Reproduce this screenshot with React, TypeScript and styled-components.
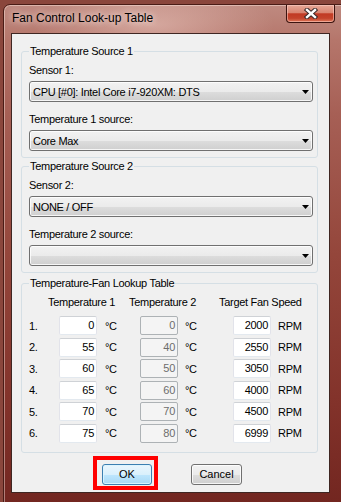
import { Fragment } from 'react';
import styled, { createGlobalStyle } from 'styled-components';

const GlobalStyle = createGlobalStyle`
  html, body { margin: 0; padding: 0; }
  body {
    width: 341px;
    height: 502px;
    overflow: hidden;
    background: #8a463c;
    font-family: "Liberation Sans", Arial, sans-serif;
  }
`;

const Window = styled.div`
  box-sizing: border-box;
  margin: 4px 0 0 3px;
  width: 345px;
  height: 502px;
  border: 1px solid #4a1c16;
  border-radius: 7px 7px 0 0;
  box-shadow: inset 0 0 0 1px rgba(255, 232, 226, 0.45);
  background:
    radial-gradient(ellipse 120px 40px at 150px 20px, rgba(235, 200, 192, 0.55), rgba(235, 200, 192, 0) 100%),
    linear-gradient(180deg, #bf8a80 0%, #b5766b 7%, #a65f55 22%, #94463b 50%, #82322a 80%, #722620 100%);
  display: flex;
  flex-direction: column;
`;

const TitleBar = styled.div`
  height: 28px;
  display: flex;
  align-items: flex-start;
  justify-content: space-between;
  flex-shrink: 0;
`;

const Title = styled.span`
  margin: 5px 0 0 8px;
  font-size: 12px;
  line-height: 16px;
  color: #000;
  text-shadow: 0 0 6px rgba(255, 240, 236, 0.9), 0 0 10px rgba(255, 240, 236, 0.6);
`;

const CloseButton = styled.div`
  box-sizing: border-box;
  width: 49px;
  height: 18px;
  margin-right: 12px;
  border: 1px solid #3b1410;
  border-top: none;
  border-radius: 0 0 4px 4px;
  box-shadow: inset 0 0 0 1px rgba(255, 210, 200, 0.55);
  background: linear-gradient(180deg, #e6a797 0%, #d98571 45%, #c13a24 52%, #c4432b 78%, #de7a5c 100%);
  display: flex;
  align-items: center;
  justify-content: center;
`;

const Client = styled.div`
  box-sizing: border-box;
  width: 319px;
  height: 460px;
  margin-left: 7px;
  border: 1px solid #3f2622;
  background: #f0f0f0;
  padding-top: 10px;
  font-size: 11px;
  letter-spacing: -0.3px;
  color: #000;
`;

const Group = styled.fieldset<{ $top: number; $bottom: number }>`
  margin: ${p => p.$top}px 11px 0 9px;
  padding: 5px 4px ${p => p.$bottom}px 7px;
  border: 1px solid #d5dfe5;
  border-radius: 3px;
  min-width: 0;
`;

const Legend = styled.legend`
  padding: 0 1px;
  line-height: 14px;
`;

const Label = styled.div<{ $gap?: number }>`
  line-height: 14px;
  margin-top: ${p => p.$gap ?? 0}px;
  margin-bottom: 4px;
`;

const Combo = styled.div`
  box-sizing: border-box;
  height: 21px;
  border: 1px solid #707070;
  border-radius: 3px;
  box-shadow: inset 0 0 0 1px rgba(255, 255, 255, 0.8);
  background: linear-gradient(180deg, #f2f2f2 0%, #ebebeb 50%, #dddddd 51%, #cfcfcf 100%);
  display: flex;
  align-items: center;
  padding-left: 3px;
  white-space: nowrap;
`;

const ComboText = styled.span`
  flex: 1;
`;

const Arrow = styled.svg`
  margin-right: 3px;
  flex-shrink: 0;
`;

const HeaderRow = styled.div`
  display: flex;
  padding-left: 19px;
  line-height: 14px;
`;

const Header = styled.span<{ $w?: number }>`
  width: ${p => (p.$w ? `${p.$w}px` : 'auto')};
  white-space: nowrap;
`;

const Rows = styled.div`
  display: grid;
  grid-template-columns: 30px 38px 43px 38px 55px 38px auto;
  grid-auto-rows: 19px;
  row-gap: 2.5px;
  margin-top: 7px;
  align-items: center;
`;

const Index = styled.span`
  line-height: 14px;
`;

const Field = styled.div<{ $disabled?: boolean }>`
  box-sizing: border-box;
  height: 19px;
  border: 1px solid;
  border-color: ${p => (p.$disabled ? '#adb2b5' : '#cfd2d6 #e2e3ea #e3e9ef #e2e3ea')};
  border-radius: 2px;
  background: ${p => (p.$disabled ? '#f4f4f4' : '#ffffff')};
  color: ${p => (p.$disabled ? '#6d6d6d' : '#000')};
  text-align: right;
  padding-right: 2px;
  line-height: 17px;
`;

const Unit = styled.span<{ $pad: number }>`
  padding-left: ${p => p.$pad}px;
  line-height: 14px;
`;

const ButtonRow = styled.div`
  display: flex;
  align-items: flex-start;
  margin-top: 3px;
  padding-left: 81px;
`;

const Highlight = styled.div`
  border: 4px solid #ff0000;
  padding: 4px 2px 1px 5px;
`;

const Button = styled.button<{ $default?: boolean; $w: number }>`
  box-sizing: border-box;
  width: ${p => p.$w}px;
  height: 21px;
  margin: 0;
  padding: 0;
  font-family: "Liberation Sans", Arial, sans-serif;
  font-size: 11px;
  color: #000;
  border-radius: 3px;
  border: 1px solid ${p => (p.$default ? '#3c7fb1' : '#707070')};
  box-shadow: inset 0 0 0 1px ${p => (p.$default ? 'rgba(220, 245, 255, 0.9)' : 'rgba(255, 255, 255, 0.8)')};
  background: ${p =>
    p.$default
      ? 'linear-gradient(180deg, #eaf6fd 0%, #d9f0fc 50%, #bee6fd 51%, #a7d9f5 100%)'
      : 'linear-gradient(180deg, #f2f2f2 0%, #ebebeb 50%, #dddddd 51%, #cfcfcf 100%)'};
`;

const CancelSlot = styled.div`
  margin: 8px 0 0 33px;
`;

const rows = [
  { t1: 0, t2: 0, fan: 2000 },
  { t1: 55, t2: 40, fan: 2550 },
  { t1: 60, t2: 50, fan: 3050 },
  { t1: 65, t2: 60, fan: 4000 },
  { t1: 70, t2: 70, fan: 4500 },
  { t1: 75, t2: 80, fan: 6999 },
];

function DropArrow() {
  return (
    <Arrow width="7" height="4" viewBox="0 0 7 4">
      <polygon points="0,0 7,0 3.5,4" fill="#000" />
    </Arrow>
  );
}

function CloseGlyph() {
  return (
    <svg width="14" height="11" viewBox="0 0 14 11">
      <g strokeLinecap="square">
        <line x1="3" y1="2" x2="11" y2="9" stroke="#3a2a2a" strokeWidth="4.4" />
        <line x1="11" y1="2" x2="3" y2="9" stroke="#3a2a2a" strokeWidth="4.4" />
        <line x1="3" y1="2" x2="11" y2="9" stroke="#ffffff" strokeWidth="2.4" />
        <line x1="11" y1="2" x2="3" y2="9" stroke="#ffffff" strokeWidth="2.4" />
      </g>
    </svg>
  );
}

export default function App() {
  return (
    <>
      <GlobalStyle />
      <Window>
        <TitleBar>
          <Title>Fan Control Look-up Table</Title>
          <CloseButton>
            <CloseGlyph />
          </CloseButton>
        </TitleBar>
        <Client>
          <Group $top={0} $bottom={6}>
            <Legend>Temperature Source 1</Legend>
            <Label>Sensor 1:</Label>
            <Combo>
              <ComboText>CPU [#0]: Intel Core i7-920XM: DTS</ComboText>
              <DropArrow />
            </Combo>
            <Label $gap={10}>Temperature 1 source:</Label>
            <Combo>
              <ComboText>Core Max</ComboText>
              <DropArrow />
            </Combo>
          </Group>

          <Group $top={1} $bottom={6}>
            <Legend>Temperature Source 2</Legend>
            <Label>Sensor 2:</Label>
            <Combo>
              <ComboText>NONE / OFF</ComboText>
              <DropArrow />
            </Combo>
            <Label $gap={10}>Temperature 2 source:</Label>
            <Combo>
              <ComboText></ComboText>
              <DropArrow />
            </Combo>
          </Group>

          <Group $top={3} $bottom={9}>
            <Legend>Temperature-Fan Lookup Table</Legend>
            <HeaderRow>
              <Header $w={81}>Temperature 1</Header>
              <Header $w={90}>Temperature 2</Header>
              <Header>Target Fan Speed</Header>
            </HeaderRow>
            <Rows>
              {rows.map((r, i) => (
                <Fragment key={i}>
                  <Index>{i + 1}.</Index>
                  <Field>{r.t1}</Field>
                  <Unit $pad={8}>°C</Unit>
                  <Field $disabled>{r.t2}</Field>
                  <Unit $pad={7}>°C</Unit>
                  <Field>{r.fan}</Field>
                  <Unit $pad={7}>RPM</Unit>
                </Fragment>
              ))}
            </Rows>
          </Group>

          <ButtonRow>
            <Highlight>
              <Button $default $w={50}>OK</Button>
            </Highlight>
            <CancelSlot>
              <Button $w={51}>Cancel</Button>
            </CancelSlot>
          </ButtonRow>
        </Client>
      </Window>
    </>
  );
}
